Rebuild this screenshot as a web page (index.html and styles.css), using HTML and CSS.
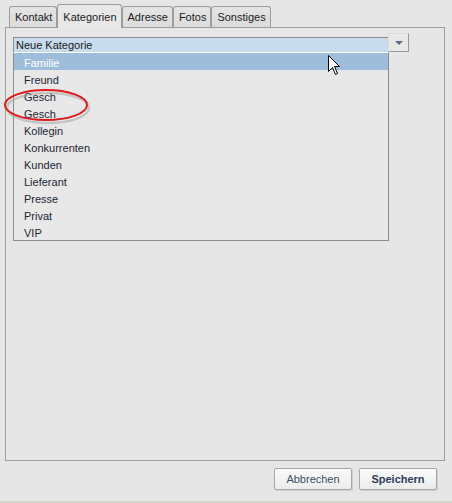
FILE: index.html
```html
<!DOCTYPE html>
<html lang="de">
<head>
  <meta charset="UTF-8">
  <title>Kontakt bearbeiten</title>
  <link rel="stylesheet" href="styles.css">
</head>
<body>
  <div class="dialog">
    <div class="tabs">
      <div class="tab">Kontakt</div>
      <div class="tab active">Kategorien</div>
      <div class="tab">Adresse</div>
      <div class="tab">Fotos</div>
      <div class="tab">Sonstiges</div>
    </div>

    <div class="panel">
      <div class="combo">
        <div class="combo-field">Neue Kategorie</div>
        <div class="combo-button"><span class="arrow"></span></div>
      </div>
      <ul class="combo-list">
        <li class="selected">Familie</li>
        <li>Freund</li>
        <li>Gesch</li>
        <li>Gesch</li>
        <li>Kollegin</li>
        <li>Konkurrenten</li>
        <li>Kunden</li>
        <li>Lieferant</li>
        <li>Presse</li>
        <li>Privat</li>
        <li>VIP</li>
      </ul>

      <!-- markierung um die doppelten Einträge -->
      <svg class="mark" width="100" height="48" viewBox="0 0 100 48">
        <ellipse cx="47" cy="24" rx="41" ry="15" fill="none" stroke="#9a9a9a" stroke-width="2.5" opacity="0.45" transform="translate(2 3)"/>
        <ellipse cx="47" cy="24" rx="41" ry="15" fill="none" stroke="#e0191c" stroke-width="2"/>
      </svg>

      <svg class="cursor" width="13" height="21" viewBox="0 0 13 21">
        <path d="M0.5 0.5 L0.5 16.5 L4.5 12.5 L7.5 19.5 L9.5 18.5 L6.5 11.5 L11.5 11.5 Z" fill="#fff" stroke="#000" stroke-width="1" stroke-linejoin="miter"/>
      </svg>
    </div>

    <div class="footer">
      <button class="btn">Abbrechen</button>
      <button class="btn primary">Speichern</button>
    </div>
  </div>
</body>
</html>
```

FILE: styles.css
```css
body {
  margin: 0;
  padding: 0;
  font-family: "Liberation Sans", Arial, sans-serif;
  font-size: 11px;
  color: #1e2a36;
  background-color: #e6e6e6;
}

.dialog {
  width: 452px;
  height: 503px;
  box-sizing: border-box;
  display: flex;
  flex-direction: column;
  background-color: #e6e6e6;
  border-bottom: 2px solid #d6d4cc;
}

.tabs {
  display: flex;
  align-items: flex-end;
  height: 27px;
  padding-left: 9px;
  box-sizing: border-box;
}

.tab {
  height: 21px;
  box-sizing: border-box;
  padding: 3px 4px 0 5px;
  border: 1px solid #9c9c9c;
  border-bottom: none;
  border-radius: 3px 3px 0 0;
  background: linear-gradient(#e4e4e4, #dcdcdc);
  color: #1c1c1c;
  line-height: 14px;
}

.tab.active {
  height: 24px;
  padding-top: 5px;
  margin-bottom: -1px;
  background: #e8e8e8;
  position: relative;
  z-index: 1;
}

.panel {
  position: relative;
  margin: 0 7px 0 5px;
  height: 434px;
  box-sizing: border-box;
  border: 1px solid #9e9e9e;
  padding: 5px 0 0 7px;
}

.combo {
  display: flex;
  align-items: flex-end;
}

.combo-field {
  width: 375px;
  height: 15px;
  box-sizing: border-box;
  border-top: 1px solid #8c8c8c;
  border-left: 1px solid #8c8c8c;
  background-color: #c9dced;
  padding-left: 2px;
  line-height: 14px;
  color: #1a1a1a;
}

.combo-button {
  width: 21px;
  height: 19px;
  box-sizing: border-box;
  border: 1px solid #9a9a9a;
  border-top-color: #dcdcdc;
  border-left-color: #dcdcdc;
  background-color: #e8e8e8;
  display: flex;
  justify-content: center;
  align-items: center;
}

.arrow {
  width: 0;
  height: 0;
  border-left: 4px solid transparent;
  border-right: 4px solid transparent;
  border-top: 4px solid #5b6c8a;
}

.combo-list {
  list-style: none;
  margin: 0;
  padding: 0;
  width: 376px;
  box-sizing: border-box;
  border-top: 1px solid #ffffff;
  border-left: 1px solid #8c8c8c;
  border-right: 1px solid #8c8c8c;
  border-bottom: 1px solid #8c8c8c;
  background-color: #e8e8e8;
}

.combo-list li {
  height: 17px;
  box-sizing: border-box;
  padding: 3px 0 0 10px;
  line-height: 14px;
  color: #1c2632;
}

.combo-list li.selected {
  background-color: #9dbdda;
  color: #ffffff;
}

.mark {
  position: absolute;
  left: -7px;
  top: 53px;
}

.cursor {
  position: absolute;
  left: 322px;
  top: 27px;
}

.footer {
  display: flex;
  justify-content: flex-end;
  gap: 7px;
  padding: 7px 15px 0 0;
}

.btn {
  width: 78px;
  height: 22px;
  font-family: "Liberation Sans", Arial, sans-serif;
  font-size: 11px;
  color: #3e4e66;
  border: 1px solid #a6a6a6;
  border-radius: 2px;
  background: linear-gradient(#fbfbfb, #ececec);
  box-shadow: 1px 1px 0 #d0d0d0;
  padding: 0;
}

.btn.primary {
  font-weight: bold;
  color: #2c3e58;
}
```
